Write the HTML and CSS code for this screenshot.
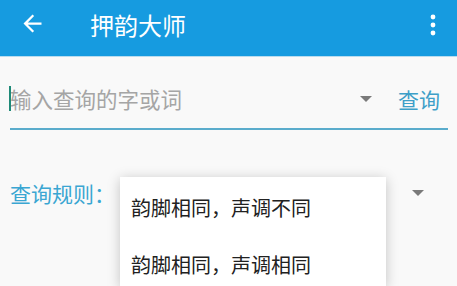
FILE: index.html
```html
<!DOCTYPE html>
<html lang="zh-CN">
<head>
    <meta charset="UTF-8">
    <meta name="viewport" content="width=device-width, initial-scale=1.0">
    <title>押韵大师</title>
    <link rel="stylesheet" href="styles.css">
</head>
<body>
    <div class="appbar">
        <span class="back">
            <svg width="27" height="27" viewBox="0 0 24 24">
                <path d="M20 11H7.83l5.59-5.59L12 4l-8 8 8 8 1.41-1.41L7.83 13H20v-2z" fill="#fff"/>
            </svg>
        </span>
        <span class="title">押韵大师</span>
        <span class="more">
            <svg width="8" height="22" viewBox="0 0 8 22">
                <circle cx="4" cy="3" r="2.4" fill="#fff"/>
                <circle cx="4" cy="11" r="2.4" fill="#fff"/>
                <circle cx="4" cy="19" r="2.4" fill="#fff"/>
            </svg>
        </span>
    </div>
    <div class="content">
        <div class="search">
            <div class="field">
                <span class="cursor"></span>
                <span class="hint">输入查询的字或词</span>
                <span class="caret"></span>
            </div>
            <span class="query">查询</span>
        </div>
        <div class="rule">
            <span class="label">查询规则：</span>
            <span class="caret rule-caret"></span>
            <div class="popup">
                <div class="item">韵脚相同，声调不同</div>
                <div class="item">韵脚相同，声调相同</div>
            </div>
        </div>
    </div>
</body>
</html>
```

FILE: styles.css
```css
html, body {
    height: 100%;
}

body {
    margin: 0;
    background-color: #f9f9f9;
    font-family: "Noto Sans CJK SC", "Noto Sans", sans-serif;
}

.appbar {
    height: 56px;
    background-color: #169be0;
    border-bottom: 1px solid #b9dcef;
    display: flex;
    align-items: center;
    color: #fff;
}

.back {
    width: 27px;
    height: 27px;
    margin-left: 19px;
    margin-top: -10px;
}

.title {
    margin-left: 44px;
    font-size: 24px;
    margin-top: -8px;
}

.more {
    margin-left: auto;
    margin-right: 20px;
    height: 22px;
    margin-top: -6px;
}

.content {
    padding: 0 9px 0 10px;
}

.search {
    display: flex;
    align-items: center;
    height: 59px;
    padding-top: 12px;
    border-bottom: 2px solid #5aaccc;
}

.field {
    flex: 1;
    display: flex;
    align-items: center;
    position: relative;
}

.cursor {
    width: 2px;
    height: 25px;
    background-color: #1f8a78;
    position: absolute;
    left: -1px;
}

.hint {
    font-size: 21.5px;
    color: #a5a5a5;
}

.caret {
    width: 0;
    height: 0;
    border-left: 6px solid transparent;
    border-right: 6px solid transparent;
    border-top: 6px solid #7a7a7a;
    margin-left: auto;
    margin-right: 26px;
}

.query {
    font-size: 21px;
    color: #3d9fc8;
    margin-right: 8px;
}

.rule {
    position: relative;
    display: flex;
    align-items: center;
    margin-top: 43px;
    height: 40px;
}

.label {
    font-size: 21px;
    color: #3aa6d2;
}

.rule-caret {
    margin-right: 24px;
}

.popup {
    position: absolute;
    left: 110px;
    top: 4px;
    width: 266px;
    height: 110px;
    background-color: #fff;
    box-shadow: 0 2px 12px rgba(0, 0, 0, 0.22);
}

.item {
    height: 57px;
    display: flex;
    align-items: center;
    padding-left: 11px;
    font-size: 20px;
    color: #212121;
}

.item:first-child {
    margin-top: 2px;
}
```
